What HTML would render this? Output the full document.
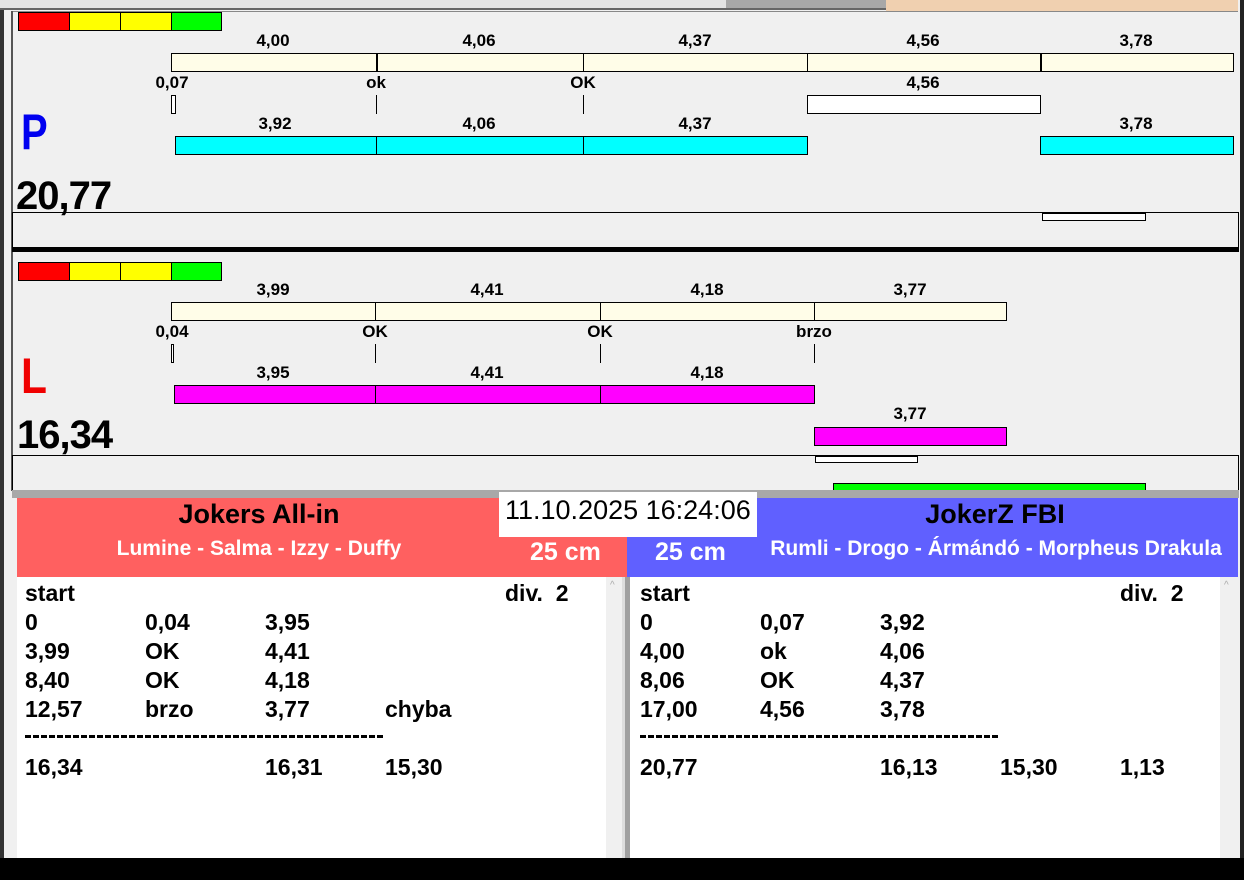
<!DOCTYPE html>
<html><head><meta charset="utf-8"><style>
*{margin:0;padding:0;box-sizing:border-box}
body{width:1244px;height:880px;position:relative;overflow:hidden;background:#f0f0f0;font-family:"Liberation Sans",Arial,sans-serif;font-weight:bold;color:#000}
div,span{position:absolute}
.b{border:1px solid #000}
.c{transform:translateX(-50%);white-space:nowrap;font-size:17px;line-height:17px}
.tk{width:1px;background:#000}
.row{font-size:23px;line-height:22px;white-space:nowrap}
.w{color:#fff;white-space:nowrap}
</style></head><body>
<div style="left:0;top:0;width:4px;height:880px;background:#333"></div>
<div style="left:11px;top:11px;width:2px;height:480px;background:#555"></div>
<div style="left:1238px;top:0;width:6px;height:880px;background:#f0f0f0"></div>
<div style="left:1240px;top:0;width:4px;height:880px;background:#222"></div>
<div style="left:0;top:0;width:886px;height:10px;background:#e4e4e4;border-bottom:2px solid #666"></div>
<div style="left:726px;top:0;width:160px;height:8px;background:#a8a8a8"></div>
<div style="left:886px;top:0;width:352px;height:11px;background:#f0d0b0"></div>
<div style="left:13px;top:11px;width:1225px;height:1px;background:#888"></div>

<div class="b" style="left:18px;top:12px;width:52px;height:19px;background:#f00"></div>
<div class="b" style="left:69px;top:12px;width:52px;height:19px;background:#ff0"></div>
<div class="b" style="left:120px;top:12px;width:52px;height:19px;background:#ff0"></div>
<div class="b" style="left:171px;top:12px;width:51px;height:19px;background:#0f0"></div>

<span class="c" style="left:273px;top:32px">4,00</span>
<span class="c" style="left:479px;top:32px">4,06</span>
<span class="c" style="left:695px;top:32px">4,37</span>
<span class="c" style="left:923px;top:32px">4,56</span>
<span class="c" style="left:1136px;top:32px">3,78</span>
<div class="b" style="left:171px;top:53px;width:1063px;height:19px;background:#fffde8"></div>
<div class="tk" style="left:376px;top:53px;height:19px;width:2px"></div>
<div class="tk" style="left:583px;top:53px;height:19px"></div>
<div class="tk" style="left:807px;top:53px;height:19px"></div>
<div class="tk" style="left:1040px;top:53px;height:19px;width:2px"></div>

<span class="c" style="left:172px;top:74px">0,07</span>
<span class="c" style="left:376px;top:74px">ok</span>
<span class="c" style="left:583px;top:74px">OK</span>
<span class="c" style="left:923px;top:74px">4,56</span>
<div class="b" style="left:171px;top:95px;width:5px;height:19px;background:#fff"></div>
<div class="tk" style="left:376px;top:95px;height:19px"></div>
<div class="tk" style="left:583px;top:95px;height:19px"></div>
<div class="b" style="left:807px;top:95px;width:234px;height:19px;background:#fff"></div>

<span style="left:21px;top:104px;font-size:50px;line-height:56px;color:#0000f0;transform:scaleX(0.8);transform-origin:left">P</span>
<span class="c" style="left:275px;top:115px">3,92</span>
<span class="c" style="left:479px;top:115px">4,06</span>
<span class="c" style="left:695px;top:115px">4,37</span>
<span class="c" style="left:1136px;top:115px">3,78</span>
<div class="b" style="left:175px;top:136px;width:633px;height:19px;background:#0ff"></div>
<div class="tk" style="left:376px;top:136px;height:19px"></div>
<div class="tk" style="left:583px;top:136px;height:19px"></div>
<div class="b" style="left:1040px;top:136px;width:194px;height:19px;background:#0ff"></div>

<span style="left:16px;top:174px;font-size:40px;line-height:44px;letter-spacing:-1px">20,77</span>
<div style="left:12px;top:212px;width:1227px;height:36px;border:1px solid #000;border-bottom:none"></div>
<div class="b" style="left:1042px;top:213px;width:104px;height:8px;background:#fff"></div>
<div style="left:12px;top:247px;width:1227px;height:5px;background:#000"></div>

<div class="b" style="left:18px;top:262px;width:52px;height:19px;background:#f00"></div>
<div class="b" style="left:69px;top:262px;width:52px;height:19px;background:#ff0"></div>
<div class="b" style="left:120px;top:262px;width:52px;height:19px;background:#ff0"></div>
<div class="b" style="left:171px;top:262px;width:51px;height:19px;background:#0f0"></div>

<span class="c" style="left:273px;top:281px">3,99</span>
<span class="c" style="left:487px;top:281px">4,41</span>
<span class="c" style="left:707px;top:281px">4,18</span>
<span class="c" style="left:910px;top:281px">3,77</span>
<div class="b" style="left:171px;top:302px;width:836px;height:19px;background:#fffde8"></div>
<div class="tk" style="left:375px;top:302px;height:19px"></div>
<div class="tk" style="left:600px;top:302px;height:19px"></div>
<div class="tk" style="left:814px;top:302px;height:19px"></div>

<span class="c" style="left:172px;top:323px">0,04</span>
<span class="c" style="left:375px;top:323px">OK</span>
<span class="c" style="left:600px;top:323px">OK</span>
<span class="c" style="left:814px;top:323px">brzo</span>
<div class="b" style="left:171px;top:344px;width:3px;height:19px;background:#fff"></div>
<div class="tk" style="left:375px;top:344px;height:19px"></div>
<div class="tk" style="left:600px;top:344px;height:19px"></div>
<div class="tk" style="left:814px;top:344px;height:19px"></div>

<span style="left:21px;top:348px;font-size:50px;line-height:56px;color:#f00000;transform:scaleX(0.85);transform-origin:left">L</span>
<span class="c" style="left:273px;top:364px">3,95</span>
<span class="c" style="left:487px;top:364px">4,41</span>
<span class="c" style="left:707px;top:364px">4,18</span>
<div class="b" style="left:174px;top:385px;width:641px;height:19px;background:#f0f"></div>
<div class="tk" style="left:375px;top:385px;height:19px"></div>
<div class="tk" style="left:600px;top:385px;height:19px"></div>
<span class="c" style="left:910px;top:405px">3,77</span>
<div class="b" style="left:814px;top:427px;width:193px;height:19px;background:#f0f"></div>

<span style="left:17px;top:413px;font-size:40px;line-height:44px;letter-spacing:-1px">16,34</span>
<div style="left:12px;top:455px;width:1227px;height:36px;border:1px solid #000;border-bottom:none"></div>
<div class="b" style="left:815px;top:456px;width:103px;height:7px;background:#fff"></div>
<div class="b" style="left:833px;top:483px;width:313px;height:8px;background:#0f0"></div>
<div style="left:12px;top:490px;width:1227px;height:8px;background:#a8a8a8"></div>

<div style="left:17px;top:498px;width:610px;height:79px;background:#ff6060"></div>
<div style="left:627px;top:498px;width:611px;height:79px;background:#6060ff"></div>
<span style="left:259px;top:499px;transform:translateX(-50%);font-size:27px;line-height:30px;white-space:nowrap">Jokers All-in</span>
<span style="left:995px;top:499px;transform:translateX(-50%);font-size:27px;line-height:30px;white-space:nowrap">JokerZ FBI</span>
<span class="w" style="left:259px;top:537px;transform:translateX(-50%);font-size:21px;line-height:24px">Lumine - Salma - Izzy - Duffy</span>
<span class="w" style="left:996px;top:537px;transform:translateX(-50%);font-size:21px;line-height:24px">Rumli - Drogo - Ármándó - Morpheus Drakula</span>
<span class="w" style="left:530px;top:538px;font-size:25px;line-height:28px">25 cm</span>
<span class="w" style="left:655px;top:538px;font-size:25px;line-height:28px">25 cm</span>
<div style="left:499px;top:492px;width:258px;height:45px;background:#fff"></div>
<span style="left:505px;top:495px;font-size:27px;line-height:30px;font-weight:normal;white-space:nowrap">11.10.2025 16:24:06</span>

<div style="left:17px;top:577px;width:590px;height:281px;background:#fff"></div>
<div style="left:606px;top:577px;width:16px;height:281px;background:#f0f0f0"></div>
<div style="left:622px;top:577px;width:8px;height:281px;background:#a0a0a0;border-left:3px solid #ddd"></div>
<div style="left:630px;top:577px;width:590px;height:281px;background:#fff"></div>
<div style="left:1220px;top:577px;width:18px;height:281px;background:#f0f0f0"></div>
<span style="left:610px;top:580px;font-size:10px;color:#aaa;font-weight:normal">^</span>
<span style="left:1224px;top:580px;font-size:10px;color:#aaa;font-weight:normal">^</span>

<div style="left:25px;top:582px">
<span class="row" style="left:0;top:0">start</span><span class="row" style="left:480px;top:0">div.&nbsp; 2</span>
<span class="row" style="left:0;top:29px">0</span><span class="row" style="left:120px;top:29px">0,04</span><span class="row" style="left:240px;top:29px">3,95</span>
<span class="row" style="left:0;top:58px">3,99</span><span class="row" style="left:120px;top:58px">OK</span><span class="row" style="left:240px;top:58px">4,41</span>
<span class="row" style="left:0;top:87px">8,40</span><span class="row" style="left:120px;top:87px">OK</span><span class="row" style="left:240px;top:87px">4,18</span>
<span class="row" style="left:0;top:116px">12,57</span><span class="row" style="left:120px;top:116px">brzo</span><span class="row" style="left:240px;top:116px">3,77</span><span class="row" style="left:360px;top:116px">chyba</span>
<span style="left:0;top:153px;width:360px;height:3px;background:repeating-linear-gradient(90deg,#000 0 6px,transparent 6px 8px)"></span>
<span class="row" style="left:0;top:174px">16,34</span><span class="row" style="left:240px;top:174px">16,31</span><span class="row" style="left:360px;top:174px">15,30</span>
</div>
<div style="left:640px;top:582px">
<span class="row" style="left:0;top:0">start</span><span class="row" style="left:480px;top:0">div.&nbsp; 2</span>
<span class="row" style="left:0;top:29px">0</span><span class="row" style="left:120px;top:29px">0,07</span><span class="row" style="left:240px;top:29px">3,92</span>
<span class="row" style="left:0;top:58px">4,00</span><span class="row" style="left:120px;top:58px">ok</span><span class="row" style="left:240px;top:58px">4,06</span>
<span class="row" style="left:0;top:87px">8,06</span><span class="row" style="left:120px;top:87px">OK</span><span class="row" style="left:240px;top:87px">4,37</span>
<span class="row" style="left:0;top:116px">17,00</span><span class="row" style="left:120px;top:116px">4,56</span><span class="row" style="left:240px;top:116px">3,78</span>
<span style="left:0;top:153px;width:360px;height:3px;background:repeating-linear-gradient(90deg,#000 0 6px,transparent 6px 8px)"></span>
<span class="row" style="left:0;top:174px">20,77</span><span class="row" style="left:240px;top:174px">16,13</span><span class="row" style="left:360px;top:174px">15,30</span><span class="row" style="left:480px;top:174px">1,13</span>
</div>

<div style="left:0;top:858px;width:1244px;height:22px;background:#000"></div>
</body></html>
